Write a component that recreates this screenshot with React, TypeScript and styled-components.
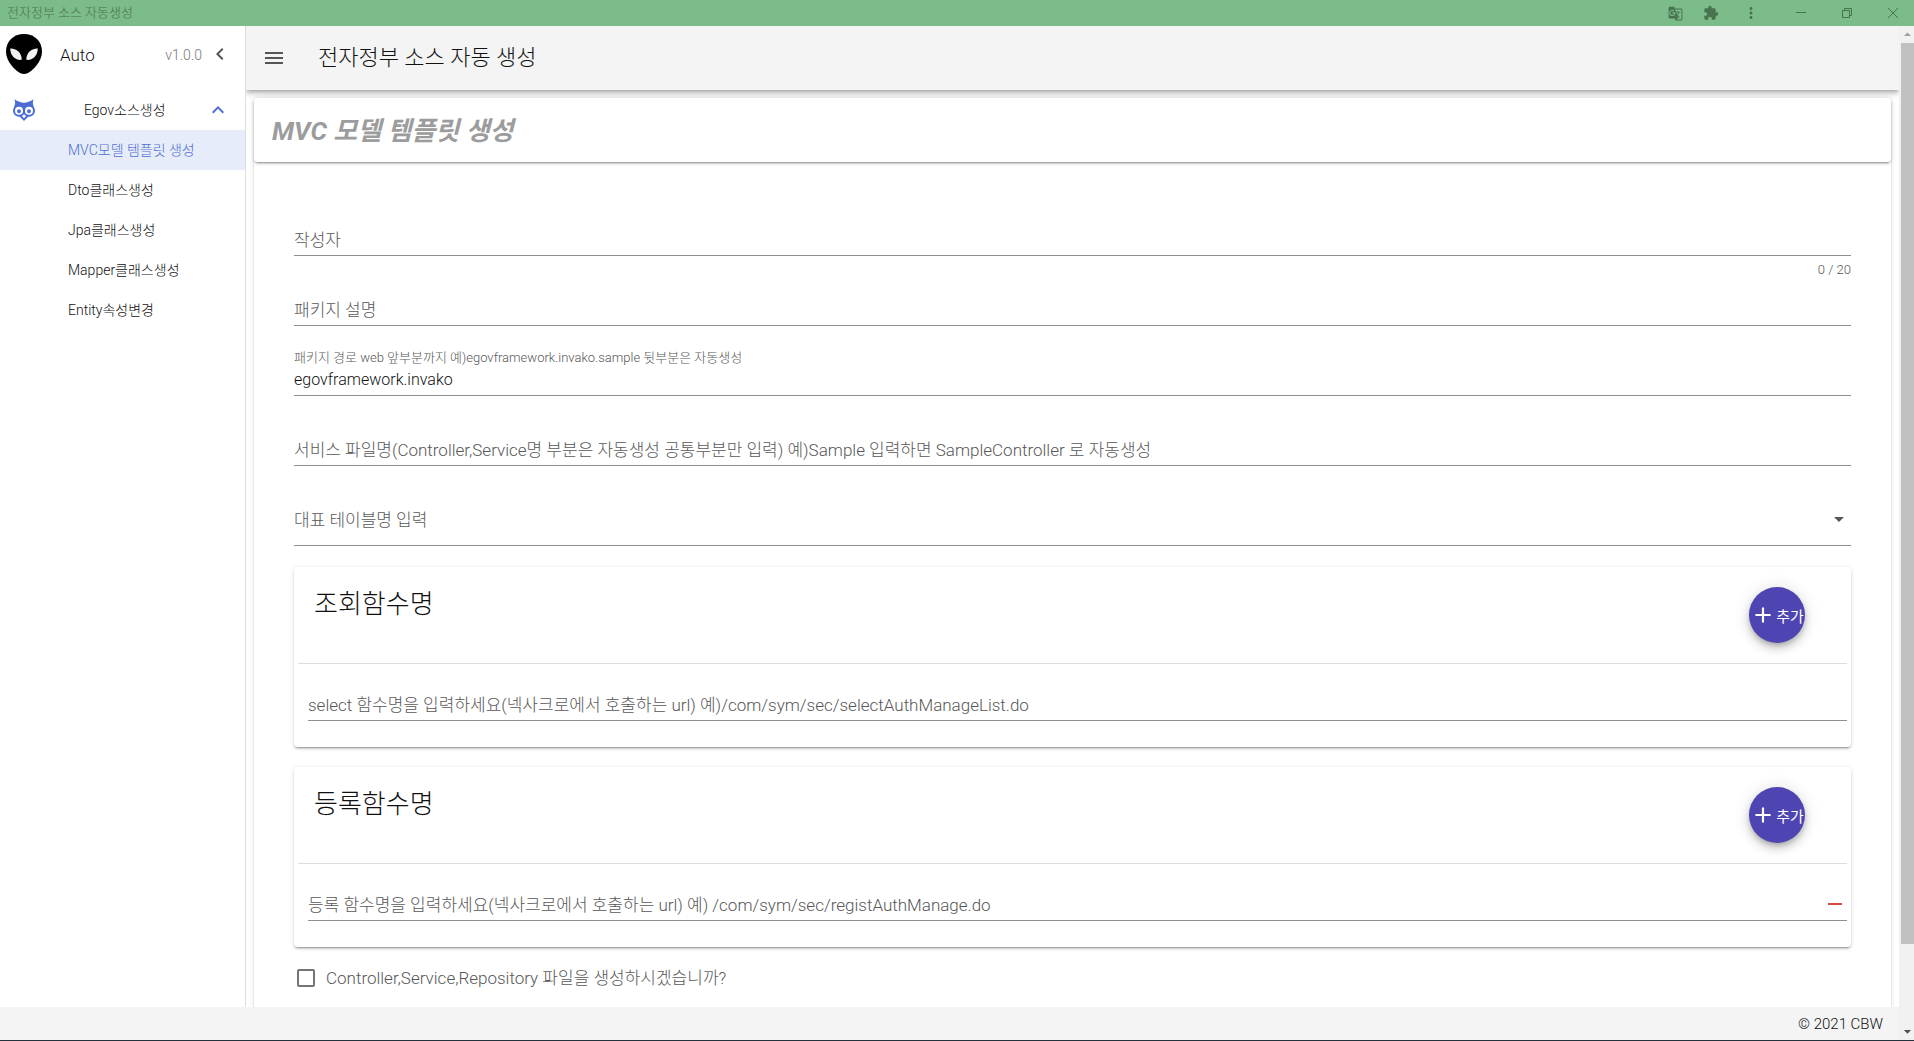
import React from 'react';
import styled, { createGlobalStyle, css } from 'styled-components';
import {
  MdAdd,
  MdArrowDropDown,
  MdArrowDropUp,
  MdChevronLeft,
  MdExtension,
  MdGTranslate,
  MdKeyboardArrowUp,
  MdMenu,
  MdMoreVert,
  MdRemove,
} from 'react-icons/md';

const color = {
  titleBar: '#7cbb8a',
  titleInk: '#47734f',
  primary: '#4e6dd4',
  primaryTint: '#e6ecf9',
  indigo: '#4e44b2',
  danger: '#d9483b',
  ink: '#111111',
  muted: '#585858',
  line: '#8f8f8f',
  divider: '#dedede',
  bar: '#f4f4f4',
};

const shadow2 =
  '0 3px 1px -2px rgba(0,0,0,.2), 0 2px 2px 0 rgba(0,0,0,.14), 0 1px 5px 0 rgba(0,0,0,.12)';
const shadow4 =
  '0 2px 4px -1px rgba(0,0,0,.2), 0 4px 5px 0 rgba(0,0,0,.14), 0 1px 10px 0 rgba(0,0,0,.12)';
const shadow6 =
  '0 3px 5px -1px rgba(0,0,0,.2), 0 6px 10px 0 rgba(0,0,0,.14), 0 1px 18px 0 rgba(0,0,0,.12)';

const GlobalStyle = createGlobalStyle`
  *, *::before, *::after { box-sizing: border-box; }
  body {
    margin: 0;
    background: #fff;
    color: ${color.ink};
    font-family: Roboto, "Noto Sans CJK KR", sans-serif;
    font-weight: 300;
    font-size: 17px;
  }
  button, input, select { font: inherit; color: inherit; }
  h1, h2, h3, p, ul { margin: 0; padding: 0; }
  svg { display: block; flex: none; }
`;

const Shell = styled.div`
  display: flex;
  flex-direction: column;
  height: 100vh;
  border-bottom: 1px solid #22303c;
`;

const TitleBar = styled.header`
  display: flex;
  align-items: center;
  justify-content: space-between;
  height: 26px;
  flex: none;
  padding-left: 7px;
  background: ${color.titleBar};
  color: ${color.titleInk};
  font-size: 13px;
  line-height: 26px;
`;

const WindowTools = styled.div`
  display: flex;
  align-items: center;
`;

const ToolButton = styled.button<{ $width: number }>`
  display: flex;
  align-items: center;
  justify-content: center;
  width: ${(p) => p.$width}px;
  height: 24px;
  padding: 0;
  border: 0;
  background: none;
`;

const Workspace = styled.div`
  display: flex;
  flex: 1;
  min-height: 0;
`;

const Page = styled.div`
  display: flex;
  flex-direction: column;
  flex: 1;
  min-width: 0;
`;

const Upper = styled.div`
  display: flex;
  flex: 1;
  min-height: 0;
`;

const Sidebar = styled.aside`
  width: 246px;
  flex: none;
  border-right: 1px solid ${color.divider};
  background: #fff;
  font-size: 14px;
`;

const Brand = styled.div`
  display: flex;
  align-items: center;
  height: 64px;
  padding: 0 13px 8px 5px;
`;

const BrandName = styled.span`
  flex: 1;
  padding: 2px 0 0 17px;
  font-size: 17px;
`;

const Version = styled.span`
  padding: 2px 6px 0 0;
  color: #777;
`;

const IconButton = styled.button`
  display: flex;
  align-items: center;
  justify-content: center;
  width: 24px;
  height: 24px;
  padding: 0;
  border: 0;
  background: none;
  color: #555;
`;

const GroupButton = styled.button`
  display: flex;
  align-items: center;
  width: 100%;
  height: 40px;
  padding: 0 15px 0 12px;
  border: 0;
  background: none;
  color: ${color.primary};
`;

const GroupLabel = styled.span`
  flex: 1;
  padding: 0 0 2px 48px;
  color: ${color.ink};
  text-align: left;
`;

const Menu = styled.ul`
  list-style: none;
`;

const MenuLink = styled.a<{ $active?: boolean }>`
  display: flex;
  align-items: center;
  height: 40px;
  padding: 0 0 2px 68px;
  color: ${(p) => (p.$active ? color.primary : color.ink)};
  background: ${(p) => (p.$active ? color.primaryTint : 'transparent')};
  text-decoration: none;
`;

const Main = styled.main`
  display: flex;
  flex-direction: column;
  flex: 1;
  min-width: 0;
  overflow: hidden;
`;

const AppBar = styled.div`
  display: flex;
  align-items: center;
  gap: 32px;
  height: 64px;
  flex: none;
  padding: 0 16px;
  background: ${color.bar};
  box-shadow: ${shadow4};
`;

const AppTitle = styled.h1`
  font-size: 22px;
  font-weight: 300;
  line-height: 32px;
`;

const Content = styled.div`
  padding: 8px 8px 0;
`;

const Surface = styled.section`
  border-radius: 4px;
  background: #fff;
  box-shadow: ${shadow2};
`;

const PageTitle = styled(Surface)`
  display: flex;
  align-items: center;
  height: 64px;
  padding: 2px 18px 0;
`;

const PageTitleText = styled.h2`
  color: #9c9c9c;
  font-size: 26px;
  font-style: italic;
  font-weight: 700;
  line-height: 32px;
`;

const Form = styled.form`
  display: flex;
  flex-direction: column;
  padding: 48px 40px 80px;
`;

const FieldGrid = styled.div<{ $tall?: boolean }>`
  display: grid;
  grid-template-columns: 1fr auto;
  grid-template-rows: 12px ${(p) => (p.$tall ? '44px 1px' : '34px 24px')};
`;

const fieldCell = css`
  grid-row: 2;
  grid-column: 1 / 3;
`;

const TextInput = styled.input`
  ${fieldCell}
  width: 100%;
  padding: 2px 0 0;
  border: 0;
  border-bottom: 1px solid ${color.line};
  outline: 0;
  background: transparent;
  font-size: 16px;
`;

const SelectInput = styled.select`
  ${fieldCell}
  width: 100%;
  border: 0;
  border-bottom: 1px solid ${color.line};
  outline: 0;
  appearance: none;
  background: transparent;
`;

const FieldLabel = styled.label<{ $floating?: boolean }>`
  grid-column: 1 / 3;
  grid-row: ${(p) => (p.$floating ? 1 : 2)};
  color: ${color.muted};
  font-size: ${(p) => (p.$floating ? 13 : 17)}px;
  line-height: ${(p) => (p.$floating ? 16 : 36)}px;
  pointer-events: none;
`;

const FieldIcon = styled.span`
  grid-row: 2;
  grid-column: 2;
  display: flex;
  align-items: center;
  height: 33px;
  color: ${color.muted};
  pointer-events: none;
`;

const RemoveButton = styled(IconButton)`
  grid-row: 2;
  grid-column: 2;
  align-self: center;
  color: ${color.danger};
`;

const Counter = styled.span`
  grid-row: 3;
  grid-column: 2;
  padding-top: 7px;
  color: ${color.muted};
  font-size: 13px;
  line-height: 14px;
`;

const FunctionCard = styled(Surface)`
  margin-top: 20px;
  padding: 0 4px 2px;
`;

const CardHeader = styled.div`
  display: flex;
  align-items: flex-start;
  justify-content: space-between;
  padding: 20px 42px 20px 16px;
  border-bottom: 1px solid ${color.divider};
`;

const CardTitle = styled.h3`
  font-size: 26px;
  font-weight: 300;
  line-height: 34px;
`;

const AddButton = styled.button`
  display: flex;
  align-items: center;
  justify-content: center;
  width: 56px;
  height: 56px;
  padding: 0;
  border: 0;
  border-radius: 50%;
  background: ${color.indigo};
  box-shadow: ${shadow6};
  color: #fff;
  font-size: 15px;
  font-weight: 400;
  white-space: nowrap;
`;

const CardBody = styled.div`
  padding: 11px 0 0 10px;
`;

const CheckRow = styled.label`
  display: flex;
  align-items: center;
  gap: 11px;
  margin-top: 20px;
  padding-left: 3px;
  color: ${color.muted};
  line-height: 22px;
`;

const CheckBox = styled.input`
  width: 18px;
  height: 18px;
  margin: 0;
  border: 2px solid #757575;
  border-radius: 2px;
  appearance: none;
`;

const Footer = styled.footer`
  display: flex;
  align-items: center;
  justify-content: flex-end;
  height: 33px;
  flex: none;
  padding: 0 16px;
  background: ${color.bar};
  font-size: 15px;
  position: relative;
`;

const ScrollTrack = styled.div`
  display: flex;
  flex-direction: column;
  width: 15px;
  flex: none;
  padding-left: 2px;
  background: #f1f1f1;
`;

const ScrollArrow = styled.div<{ $dark?: boolean }>`
  display: flex;
  justify-content: center;
  align-items: center;
  height: 17px;
  color: ${(p) => (p.$dark ? '#505050' : '#a0a0a0')};
`;

const ScrollThumb = styled.div`
  flex: 901;
  background: #c1c1c1;
`;

const ScrollRest = styled.div`
  flex: 79;
`;

function AlienIcon() {
  return (
    <svg width="38" height="40" viewBox="0 0 38 40" aria-hidden="true">
      <path
        d="M19 0C8.400 0 1 7.500 1 17.500C1 28 10.500 36.500 15.500 39.200Q19 40.800 22.500 39.200C27.500 36.500 37 28 37 17.500C37 7.500 29.600 0 19 0Z"
        fill="#000"
      />
      <path d="M5.200 14.500C10 14 16.500 17.500 16.800 25.800C10.500 26.800 5.500 22 5.200 14.500Z" fill="#f2f2f2" />
      <path d="M32.800 14.500C28 14 21.500 17.500 21.200 25.800C27.500 26.800 32.500 22 32.800 14.500Z" fill="#f2f2f2" />
    </svg>
  );
}

function OwlIcon() {
  return (
    <svg width="24" height="24" viewBox="0 0 24 24" fill="currentColor" aria-hidden="true">
      <path d="M12,16C12.56,16.84 13.31,17.53 14.2,18L12,20.2L9.8,18C10.69,17.53 11.45,16.84 12,16M17,11.2A2,2 0 0,0 15,13.2A2,2 0 0,0 17,15.2A2,2 0 0,0 19,13.2C19,12.09 18.1,11.2 17,11.2M7,11.2A2,2 0 0,0 5,13.2A2,2 0 0,0 7,15.2A2,2 0 0,0 9,13.2C9,12.09 8.1,11.2 7,11.2M17,8.7A4,4 0 0,1 21,12.7A4,4 0 0,1 17,16.7A4,4 0 0,1 13,12.7A4,4 0 0,1 17,8.7M7,8.7A4,4 0 0,1 11,12.7A4,4 0 0,1 7,16.7A4,4 0 0,1 3,12.7A4,4 0 0,1 7,8.7M2.24,1C4,4.7 2.73,7.46 1.55,10.2C1.19,11 1,11.83 1,12.7A6,6 0 0,0 7,18.7C7.21,18.69 7.42,18.68 7.63,18.65L10.59,21.61L12,23L13.41,21.61L16.37,18.65C16.58,18.68 16.79,18.69 17,18.7A6,6 0 0,0 23,12.7C23,11.83 22.81,11 22.45,10.2C21.27,7.46 20,4.7 21.76,1C19.12,3.06 15.36,4.69 12,4.7C8.64,4.69 4.88,3.06 2.24,1Z" />
    </svg>
  );
}

function WindowGlyph({ d }: { d: string }) {
  return (
    <svg width="12" height="12" viewBox="0 0 12 12" fill="none" stroke="currentColor" aria-hidden="true">
      <path d={d} />
    </svg>
  );
}

interface FieldProps {
  id: string;
  label: string;
  value?: string;
  counter?: string;
  children?: React.ReactNode;
}

function Field({ id, label, value = '', counter, children }: FieldProps) {
  return (
    <FieldGrid>
      <FieldLabel htmlFor={id} $floating={value !== ''}>
        {label}
      </FieldLabel>
      <TextInput id={id} type="text" defaultValue={value} />
      {children}
      {counter && <Counter>{counter}</Counter>}
    </FieldGrid>
  );
}

interface FunctionSectionProps {
  id: string;
  title: string;
  label: string;
  removable?: boolean;
}

function FunctionSection({ id, title, label, removable }: FunctionSectionProps) {
  return (
    <FunctionCard>
      <CardHeader>
        <CardTitle>{title}</CardTitle>
        <AddButton type="button">
          <MdAdd size={26} />
          추가
        </AddButton>
      </CardHeader>
      <CardBody>
        <Field id={id} label={label}>
          {removable && (
            <RemoveButton type="button" aria-label="삭제">
              <MdRemove size={24} />
            </RemoveButton>
          )}
        </Field>
      </CardBody>
    </FunctionCard>
  );
}

const menuItems = [
  'MVC모델 템플릿 생성',
  'Dto클래스생성',
  'Jpa클래스생성',
  'Mapper클래스생성',
  'Entity속성변경',
];

export default function App() {
  return (
    <>
      <GlobalStyle />
      <Shell>
        <TitleBar>
          <span>전자정부 소스 자동생성</span>
          <WindowTools>
            <ToolButton $width={50} aria-label="번역">
              <MdGTranslate size={15} />
            </ToolButton>
            <ToolButton $width={22} aria-label="확장 프로그램">
              <MdExtension size={16} />
            </ToolButton>
            <ToolButton $width={58} aria-label="더보기">
              <MdMoreVert size={18} />
            </ToolButton>
            <ToolButton $width={42} aria-label="최소화">
              <WindowGlyph d="M1 5.500H11" />
            </ToolButton>
            <ToolButton $width={50} aria-label="이전 크기로">
              <WindowGlyph d="M1.500 3.500H8.500V10.500H1.500ZM3.500 3.500V1.500H10.500V8.500H8.500" />
            </ToolButton>
            <ToolButton $width={42} aria-label="닫기">
              <WindowGlyph d="M1 1L11 11M11 1L1 11" />
            </ToolButton>
          </WindowTools>
        </TitleBar>
        <Workspace>
          <Page>
            <Upper>
              <Sidebar>
                <Brand>
                  <AlienIcon />
                  <BrandName>Auto</BrandName>
                  <Version>v1.0.0</Version>
                  <IconButton type="button" aria-label="메뉴 닫기">
                    <MdChevronLeft size={24} />
                  </IconButton>
                </Brand>
                <nav>
                  <GroupButton type="button" aria-expanded="true">
                    <OwlIcon />
                    <GroupLabel>Egov소스생성</GroupLabel>
                    <MdKeyboardArrowUp size={24} />
                  </GroupButton>
                  <Menu>
                    {menuItems.map((item, i) => (
                      <li key={item}>
                        <MenuLink href="#" $active={i === 0}>
                          {item}
                        </MenuLink>
                      </li>
                    ))}
                  </Menu>
                </nav>
              </Sidebar>
              <Main>
                <AppBar>
                  <IconButton type="button" aria-label="메뉴">
                    <MdMenu size={24} />
                  </IconButton>
                  <AppTitle>전자정부 소스 자동 생성</AppTitle>
                </AppBar>
                <Content>
                  <Surface>
                    <PageTitle>
                      <PageTitleText>MVC 모델 템플릿 생성</PageTitleText>
                    </PageTitle>
                    <Form>
                      <Field id="author" label="작성자" counter="0 / 20" />
                      <Field id="package-description" label="패키지 설명" />
                      <Field
                        id="package-path"
                        label="패키지 경로 web 앞부분까지 예)egovframework.invako.sample 뒷부분은 자동생성"
                        value="egovframework.invako"
                      />
                      <Field
                        id="service-name"
                        label="서비스 파일명(Controller,Service명 부분은 자동생성 공통부분만 입력) 예)Sample 입력하면 SampleController 로 자동생성"
                      />
                      <FieldGrid $tall>
                        <FieldLabel htmlFor="table-name">대표 테이블명 입력</FieldLabel>
                        <SelectInput id="table-name" defaultValue="">
                          <option value="" />
                        </SelectInput>
                        <FieldIcon>
                          <MdArrowDropDown size={24} />
                        </FieldIcon>
                      </FieldGrid>
                      <FunctionSection
                        id="select-function"
                        title="조회함수명"
                        label="select 함수명을 입력하세요(넥사크로에서 호출하는 url) 예)/com/sym/sec/selectAuthManageList.do"
                      />
                      <FunctionSection
                        id="register-function"
                        title="등록함수명"
                        label="등록 함수명을 입력하세요(넥사크로에서 호출하는 url) 예) /com/sym/sec/registAuthManage.do"
                        removable
                      />
                      <CheckRow>
                        <CheckBox type="checkbox" />
                        Controller,Service,Repository 파일을 생성하시겠습니까?
                      </CheckRow>
                    </Form>
                  </Surface>
                </Content>
              </Main>
            </Upper>
            <Footer>© 2021 CBW</Footer>
          </Page>
          <ScrollTrack aria-hidden="true">
            <ScrollArrow>
              <MdArrowDropUp size={17} />
            </ScrollArrow>
            <ScrollThumb />
            <ScrollRest />
            <ScrollArrow $dark>
              <MdArrowDropDown size={17} />
            </ScrollArrow>
          </ScrollTrack>
        </Workspace>
      </Shell>
    </>
  );
}
